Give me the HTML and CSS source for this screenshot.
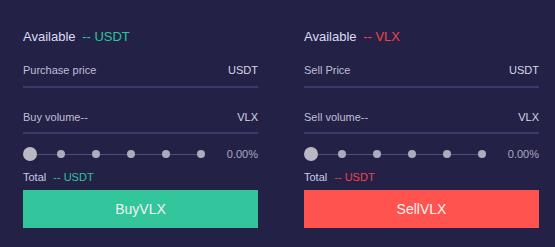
FILE: index.html
```html
<!DOCTYPE html>
<html>
<head>
<meta charset="utf-8">
<link rel="stylesheet" href="styles.css">
</head>
<body>
<div class="trade">
  <section class="panel buy">
    <div class="avail">Available <span class="amt">-- USDT</span></div>
    <div class="field first"><span>Purchase price</span><span class="unit">USDT</span></div>
    <div class="field second"><span>Buy volume--</span><span class="unit">VLX</span></div>
    <div class="slider">
      <div class="track">
        <span class="knob"></span><span class="seg s0"></span>
        <span class="dot"></span><span class="seg"></span>
        <span class="dot"></span><span class="seg"></span>
        <span class="dot"></span><span class="seg"></span>
        <span class="dot"></span><span class="seg"></span>
        <span class="dot"></span>
      </div>
      <span class="pct">0.00%</span>
    </div>
    <div class="total">Total <span class="amt">-- USDT</span></div>
    <button class="action">BuyVLX</button>
  </section>
  <section class="panel sell">
    <div class="avail">Available <span class="amt">-- VLX</span></div>
    <div class="field first"><span>Sell Price</span><span class="unit">USDT</span></div>
    <div class="field second"><span>Sell volume--</span><span class="unit">VLX</span></div>
    <div class="slider">
      <div class="track">
        <span class="knob"></span><span class="seg s0"></span>
        <span class="dot"></span><span class="seg"></span>
        <span class="dot"></span><span class="seg"></span>
        <span class="dot"></span><span class="seg"></span>
        <span class="dot"></span><span class="seg"></span>
        <span class="dot"></span>
      </div>
      <span class="pct">0.00%</span>
    </div>
    <div class="total">Total <span class="amt">-- USDT</span></div>
    <button class="action">SellVLX</button>
  </section>
</div>
</body>
</html>
```

FILE: styles.css
```css
html, body {
  margin: 0;
  padding: 0;
  background: #232246;
  width: 555px;
  height: 247px;
  overflow: hidden;
  font-family: "Liberation Sans", Arial, sans-serif;
}
.trade {
  display: flex;
  gap: 46px;
  padding: 27px 0 0 23px;
}
.panel {
  width: 235px;
  display: flex;
  flex-direction: column;
}
.avail {
  font-size: 13px;
  line-height: 20px;
  color: #dcdcf4;
}
.avail .amt {
  margin-left: 3px;
}
.buy .amt { color: #2fc39d; }
.sell .amt { color: #f0424a; }
.field {
  display: flex;
  justify-content: space-between;
  font-size: 11px;
  line-height: 16px;
  color: #bfbfd8;
  padding-bottom: 8px;
  border-bottom: 2px solid #3b3a6c;
}
.field .unit { color: #d6d6e6; }
.field.first { margin-top: 15px; }
.field.second { margin-top: 21px; padding-bottom: 7px; }
.slider {
  margin-top: 13px;
  height: 14px;
  display: flex;
  align-items: center;
  justify-content: space-between;
}
.track {
  display: flex;
  align-items: center;
}
.knob {
  width: 14px;
  height: 14px;
  border-radius: 50%;
  background: #b9b9c6;
}
.dot {
  width: 8px;
  height: 8px;
  border-radius: 50%;
  background: #acacbc;
}
.seg {
  width: 27px;
  height: 1px;
  background: #4f4e78;
}
.seg.s0 { width: 20px; }
.pct {
  font-size: 11px;
  color: #a9a9c2;
}
.total {
  margin-top: 8px;
  font-size: 11px;
  line-height: 16px;
  color: #cacaea;
}
.total .amt { margin-left: 4px; }
.action {
  margin-top: 5px;
  height: 38px;
  border: none;
  padding: 0;
  font-family: "Liberation Sans", Arial, sans-serif;
  font-size: 14px;
  color: #f2f2f2;
  cursor: pointer;
}
.buy .action { background: #33c59c; }
.sell .action { background: #fe534f; }
```
